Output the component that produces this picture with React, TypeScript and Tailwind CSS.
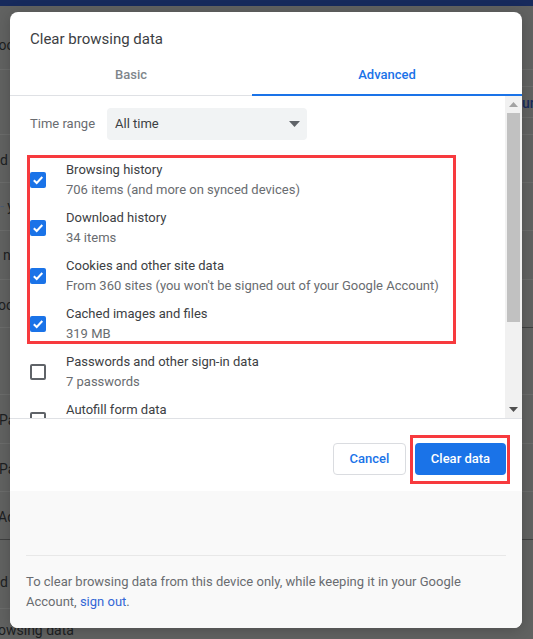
import React from "react";

const ROWS = [
  { title: "Browsing history", sub: "706 items (and more on synced devices)", checked: true },
  { title: "Download history", sub: "34 items", checked: true },
  { title: "Cookies and other site data", sub: "From 360 sites (you won't be signed out of your Google Account)", checked: true },
  { title: "Cached images and files", sub: "319 MB", checked: true },
  { title: "Passwords and other sign-in data", sub: "7 passwords", checked: false },
  { title: "Autofill form data", sub: "2 addresses", checked: false },
];

function Checkbox({ checked }: { checked: boolean }) {
  if (!checked) {
    return <div className="w-4 h-4 shrink-0 rounded-[2px] border-2 border-[#5f6368]" />;
  }
  return (
    <div className="w-4 h-4 shrink-0 rounded-[2px] bg-[#1a73e8] flex items-center justify-center">
      <svg width="12" height="12" viewBox="0 0 12 12" fill="none">
        <path d="M1.8 6.2 L4.7 9 L10.3 3" stroke="#fff" strokeWidth="2" />
      </svg>
    </div>
  );
}

function DataRow({ title, sub, checked }: { title: string; sub: string; checked: boolean }) {
  return (
    <div className="h-12 flex items-center shrink-0">
      <Checkbox checked={checked} />
      <div className="ml-[20px] text-[13px] leading-[20px] whitespace-nowrap">
        <div className="text-[#3c4043]">{title}</div>
        <div className="text-[#696c70]">{sub}</div>
      </div>
    </div>
  );
}

function Backdrop() {
  return (
    <div className="absolute inset-0 flex flex-col bg-[#616261] overflow-hidden font-['Roboto',sans-serif] text-[14px] text-[#1d1f22]">
      <div className="h-[6px] shrink-0 bg-[#172a5c]" />
      <div className="flex flex-1 justify-between">
        <div className="w-[60px] flex flex-col">
          <div className="h-[64px] pt-[29px] border-b border-[#6b6c6b] leading-[20px] -ml-[11px]">Goo</div>
          <div className="h-[65px] border-b border-[#6b6c6b]" />
          <div className="h-[48px] pt-[15px] border-b border-[#6b6c6b] leading-[20px]">d</div>
          <div className="h-[48px] pt-[13px] border-b border-[#6b6c6b] leading-[20px]">
            <span className="text-[#4a5a70]">-</span> y
          </div>
          <div className="h-[49px] pt-[14px] border-b border-[#6b6c6b] leading-[20px] pl-[3px]">n</div>
          <div className="h-[48px] pt-[15px] border-b border-[#6b6c6b] leading-[20px] -ml-[2px]">oo</div>
          <div className="h-[67px] border-b border-[#6b6c6b]" />
          <div className="h-[49px] pt-[15px] border-b border-[#6b6c6b] leading-[20px] -ml-[1px]">Pa</div>
          <div className="h-[48px] pt-[15px] border-b border-[#6b6c6b] leading-[20px] -ml-[1px]">Pay</div>
          <div className="h-[48px] pt-[15px] border-b border-[#3f4040] leading-[20px] -ml-[2px]">Ad</div>
          <div className="h-[69px] pt-[32px] border-b border-[#6b6c6b] leading-[20px]">d</div>
          <div className="pt-[11px] leading-[20px] -ml-[2px] whitespace-nowrap">owsing data</div>
        </div>
        <div className="w-[60px] flex flex-col">
          <div className="h-[64px] border-b border-[#6b6c6b]" />
          <div className="h-[17px] border-b border-[#6b6c6b]" />
          <div className="h-[31px] pt-[6px] border-b border-[#6b6c6b] leading-[20px] pl-[49px] font-medium text-[#172a5c] whitespace-nowrap overflow-hidden">ur</div>
          <div className="h-[17px] border-b border-[#6b6c6b]" />
          <div className="h-[48px] border-b border-[#6b6c6b]" />
          <div className="h-[48px] border-b border-[#6b6c6b]" />
          <div className="h-[49px] border-b border-[#6b6c6b]" />
          <div className="h-[48px] border-b border-[#3f4040]" />
          <div className="h-[67px] border-b border-[#6b6c6b]" />
          <div className="h-[49px] border-b border-[#6b6c6b]" />
          <div className="h-[48px] border-b border-[#6b6c6b]" />
          <div className="h-[48px] border-b border-[#3f4040]" />
        </div>
      </div>
    </div>
  );
}

function Scrollbar() {
  return (
    <div className="w-[17px] shrink-0 bg-[#f1f1f1] flex flex-col items-center">
      <div className="h-[17px] w-full flex items-center justify-center">
        <svg width="9" height="5" viewBox="0 0 9 5"><path d="M4.5 0 L9 5 L0 5 Z" fill="#a3a3a3" /></svg>
      </div>
      <div className="h-[209px] w-[13px] bg-[#c1c1c1]" />
      <div className="flex-1" />
      <div className="h-[17px] w-full flex items-center justify-center">
        <svg width="9" height="5" viewBox="0 0 9 5"><path d="M0 0 L9 0 L4.5 5 Z" fill="#505050" /></svg>
      </div>
    </div>
  );
}

export default function App() {
  return (
    <div className="relative w-[533px] h-[639px] overflow-hidden font-['Roboto',sans-serif]">
      <Backdrop />
      <div className="absolute left-[10px] top-[12px] w-[512px] h-[616px] rounded-[8px] bg-white overflow-hidden flex flex-col shadow-[0_2px_14px_rgba(0,0,0,0.2)]">
        <div className="h-[54px] shrink-0 pl-[20px] pt-[17px] text-[15px] leading-[20px] text-[#3c4043]">Clear browsing data</div>

        <div className="h-[30px] shrink-0 flex border-b border-[#dfe1e5] text-[13px] font-medium">
          <div className="w-[242px] -mt-px text-center leading-[20px] text-[#80868b]">Basic</div>
          <div className="flex-1 -mb-px border-b-2 border-[#1a73e8] text-center leading-[18px] text-[#1a73e8]">Advanced</div>
        </div>

        <div className="h-[322px] shrink-0 flex overflow-hidden">
          <div className="flex-1 pl-[20px] overflow-hidden flex flex-col">
            <div className="flex items-center mt-[12px] h-[32px] shrink-0 text-[13px]">
              <div className="w-[77px] text-[#696c70]">Time range</div>
              <div className="w-[200px] h-[32px] rounded-[4px] bg-[#f1f3f4] flex items-center justify-between pl-[8px] pr-[7px] text-[#3c4043]">
                All time
                <svg width="11" height="6" viewBox="0 0 11 6"><path d="M0 0 L11 0 L5.5 6 Z" fill="#5f6368" /></svg>
              </div>
            </div>
            <div className="mt-[16px] flex flex-col">
              {ROWS.map((r) => (
                <DataRow key={r.title} title={r.title} sub={r.sub} checked={r.checked} />
              ))}
            </div>
          </div>
          <Scrollbar />
        </div>

        <div className="h-[73px] shrink-0 border-t border-[#dfe1e5] flex justify-end items-start pt-[24px] pr-[16px] gap-[9px] text-[13px] font-medium">
          <div className="w-[73px] h-[32px] rounded-[4px] border border-[#dadce0] flex items-center justify-center text-[#1a73e8]">Cancel</div>
          <div className="w-[91px] h-[32px] rounded-[4px] bg-[#1a73e8] flex items-center justify-center text-white">Clear data</div>
        </div>

        <div className="flex-1 bg-[#f9f9f9] px-[16px] pt-[64px]">
          <div className="border-t border-[#e8e8e8] pt-[16px] text-[13px] leading-[20px] text-[#696c70]">
            To clear browsing data from this device only, while keeping it in your Google Account, <span className="text-[#3367d6]">sign out</span>.
          </div>
        </div>
      </div>

      {/* red annotation boxes drawn on top of the screenshot */}
      <div className="absolute left-[27px] top-[155px] w-[429px] h-[189px] border-[3px] border-[#f73a3e]" />
      <div className="absolute left-[410px] top-[435px] w-[100px] h-[49px] border-[3px] border-[#f73a3e]" />
    </div>
  );
}
